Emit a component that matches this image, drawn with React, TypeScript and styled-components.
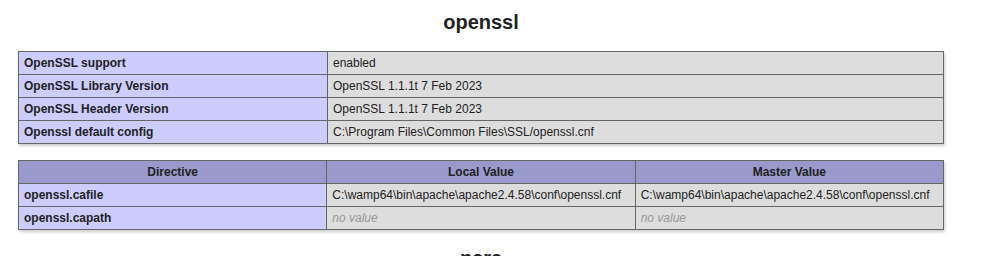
import React from 'react';
import styled, {createGlobalStyle} from 'styled-components';

const GlobalStyle = createGlobalStyle`
  body {
    margin: 0;
    background-color: #fff;
    color: #222;
    font-family: "Liberation Sans", Arial, sans-serif;
  }
`;

interface IRow {
  name: string;
  value: string;
}

interface IDirective {
  name: string;
  local: string | null;
  master: string | null;
}

const infoRows: IRow[] = [
  {name: 'OpenSSL support', value: 'enabled'},
  {name: 'OpenSSL Library Version', value: 'OpenSSL 1.1.1t 7 Feb 2023'},
  {name: 'OpenSSL Header Version', value: 'OpenSSL 1.1.1t 7 Feb 2023'},
  {name: 'Openssl default config', value: 'C:\\Program Files\\Common Files\\SSL/openssl.cnf'},
];

const directives: IDirective[] = [
  {
    name: 'openssl.cafile',
    local: 'C:\\wamp64\\bin\\apache\\apache2.4.58\\conf\\openssl.cnf',
    master: 'C:\\wamp64\\bin\\apache\\apache2.4.58\\conf\\openssl.cnf',
  },
  {name: 'openssl.capath', local: null, master: null},
];

const Value: React.FC<{text: string | null}> = ({text}) =>
  text === null ? <NoValue>no value</NoValue> : <>{text}</>;

const App: React.FC = () => {
  return (
    <>
      <GlobalStyle/>
      <Page>
        <Title>openssl</Title>
        <InfoTable>
          <tbody>
            {infoRows.map(row => (
              <tr key={row.name}>
                <KeyCell>{row.name}</KeyCell>
                <ValueCell>{row.value}</ValueCell>
              </tr>
            ))}
          </tbody>
        </InfoTable>
        <InfoTable>
          <thead>
            <tr>
              <HeadCell>Directive</HeadCell>
              <HeadCell>Local Value</HeadCell>
              <HeadCell>Master Value</HeadCell>
            </tr>
          </thead>
          <tbody>
            {directives.map(d => (
              <tr key={d.name}>
                <KeyCell>{d.name}</KeyCell>
                <ValueCell><Value text={d.local}/></ValueCell>
                <ValueCell><Value text={d.master}/></ValueCell>
              </tr>
            ))}
          </tbody>
        </InfoTable>
        <Title>pcre</Title>
      </Page>
    </>
  );
};
export default App


const Page = styled.div`
  display: flow-root;
  width: 926px;
  margin-left: 18px;
  margin-top: -6px;
`;

const Title = styled.h2`
  font-size: 20px;
  font-weight: bold;
  text-align: center;
  margin: 17px 0;
  line-height: 23px;
`;

const InfoTable = styled.table`
  border-collapse: collapse;
  border: 0;
  width: 926px;
  margin: 16px 0;
  text-align: left;
  box-shadow: 1px 2px 3px #ccc;
  table-layout: fixed;
`;

const cell = `
  border: 1px solid #666;
  font-size: 12px;
  line-height: 14px;
  vertical-align: baseline;
  padding: 4px 5px;
  white-space: nowrap;
  overflow: hidden;
`;

const HeadCell = styled.th`
  ${cell};
  background-color: #99c;
  font-weight: bold;
  text-align: center;
`;

const KeyCell = styled.td`
  ${cell};
  background-color: #ccf;
  width: 298px;
  font-weight: bold;
`;

const ValueCell = styled.td`
  ${cell};
  background-color: #ddd;
`;

const NoValue = styled.i`
  color: #999;
`;
